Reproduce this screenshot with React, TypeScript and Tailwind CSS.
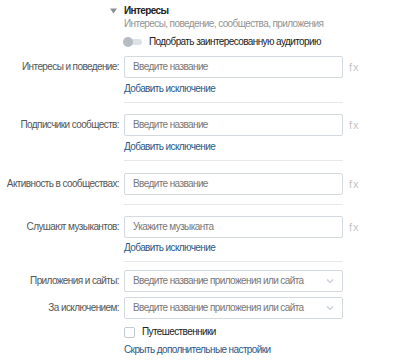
import React from "react";

function Field({ label, placeholder, fx = true, select = false }: { label: string; placeholder: string; fx?: boolean; select?: boolean }) {
  return (
    <div className="flex items-center h-[22px]">
      <div className="w-[119px] text-right text-[#555] whitespace-nowrap">{label}</div>
      <div className="ml-[5px] w-[219px] h-[22px] border border-[#d3d9de] rounded-[2px] flex items-center pl-[8px] pr-[8px] text-[#777]">
        <span className="flex-1 whitespace-nowrap overflow-hidden">{placeholder}</span>
        {select && (
          <svg width="8" height="6" viewBox="0 0 8 6">
            <path d="M1 1.5 L4 4.5 L7 1.5" fill="none" stroke="#c5cdd6" strokeWidth="1.2" />
          </svg>
        )}
      </div>
      {fx && <div className="ml-[6px] text-[#c4c4c4] text-[11px] tracking-[1px]">fx</div>}
    </div>
  );
}

function Link({ children, className = "" }: { children: React.ReactNode; className?: string }) {
  return <div className={"ml-[124px] h-[14px] leading-[14px] text-[#2a5885] whitespace-nowrap " + className}>{children}</div>;
}

function Divider({ className = "" }: { className?: string }) {
  return <div className={"ml-[124px] w-[219px] h-px bg-[#e7e8ec] " + className} />;
}

export default function App() {
  return (
    <div className="w-[399px] h-[362px] bg-white overflow-hidden font-['Liberation_Sans',Arial,sans-serif] text-[10px] tracking-[-0.6px] leading-[14px]">
      <div className="pt-[4px]">
        <div className="flex items-center h-[14px] ml-[110px]">
          <svg width="7" height="6" viewBox="0 0 7 6" className="mr-[7px]">
            <path d="M0 0.5 L7 0.5 L3.5 5.5 Z" fill="#8a8f96" />
          </svg>
          <span className="font-bold text-[#222]">Интересы</span>
        </div>
        <div className="ml-[124px] mt-[-1px] h-[14px] text-[#939393] whitespace-nowrap">Интересы, поведение, сообщества, приложения</div>
        <div className="ml-[123px] mt-[4px] flex items-center h-[14px]">
          <div className="relative w-[19px] h-[10px] flex items-center">
            <div className="absolute left-[3px] right-0 h-[6px] rounded-full bg-[#dde2e7]" />
            <div className="absolute left-0 w-[10px] h-[10px] rounded-full bg-[#b5bcc4]" />
          </div>
          <span className="ml-[7px] text-[#222] whitespace-nowrap">Подобрать заинтересованную аудиторию</span>
        </div>

        <div className="mt-[7px]">
          <Field label="Интересы и поведение:" placeholder="Введите название" />
        </div>
        <Link className="mt-[4px]">Добавить исключение</Link>
        <Divider className="mt-[6px]" />

        <div className="mt-[11px]">
          <Field label="Подписчики сообществ:" placeholder="Введите название" />
        </div>
        <Link className="mt-[4px]">Добавить исключение</Link>
        <Divider className="mt-[6px]" />

        <div className="mt-[12px]">
          <Field label="Активность в сообществах:" placeholder="Введите название" />
        </div>
        <Divider className="mt-[9px]" />

        <div className="mt-[11px]">
          <Field label="Слушают музыкантов:" placeholder="Укажите музыканта" />
        </div>
        <Link className="mt-[3px]">Добавить исключение</Link>
        <Divider className="mt-[6px]" />

        <div className="mt-[8px]">
          <Field label="Приложения и сайты:" placeholder="Введите название приложения или сайта" fx={false} select />
        </div>
        <div className="mt-[5px]">
          <Field label="За исключением:" placeholder="Введите название приложения или сайта" fx={false} select />
        </div>

        <div className="ml-[124px] mt-[6px] flex items-center h-[14px]">
          <div className="w-[11px] h-[11px] border border-[#c1c9d1] rounded-[2px] bg-white" />
          <span className="ml-[7px] text-[#222] whitespace-nowrap">Путешественники</span>
        </div>
        <Link className="mt-[4px]">Скрыть дополнительные настройки</Link>
      </div>
    </div>
  );
}
